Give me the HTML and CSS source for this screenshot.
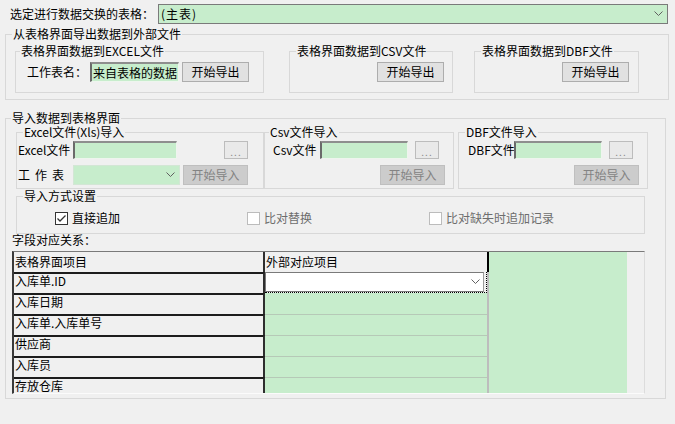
FILE: index.html
```html
<!DOCTYPE html>
<html lang="zh-CN">
<head>
<meta charset="utf-8">
<title>数据交换</title>
<link rel="stylesheet" href="styles.css">
</head>
<body>
<div class="app">
  <div class="top-row">
    <span class="top-label">选定进行数据交换的表格：</span>
    <div class="combo main-combo">
      <span class="combo-text">(主表)</span>
      <svg class="chev" width="9" height="6" viewBox="0 0 9 6"><path d="M0.5 0.5 L4.5 4.5 L8.5 0.5" fill="none" stroke="#606060" stroke-width="1"/></svg>
    </div>
  </div>

  <fieldset class="group g-export">
    <legend>从表格界面导出数据到外部文件</legend>
    <div class="sub-row">
      <fieldset class="sub ex-excel">
        <legend>表格界面数据到EXCEL文件</legend>
        <div class="line">
          <span class="lbl w-sheet">工作表名：</span>
          <input class="field w-89" type="text" value="来自表格的数据" readonly>
          <button class="btn w-67 ml-3">开始导出</button>
        </div>
      </fieldset>
      <fieldset class="sub ex-csv">
        <legend>表格界面数据到CSV文件</legend>
        <div class="line end">
          <button class="btn w-67">开始导出</button>
        </div>
      </fieldset>
      <fieldset class="sub ex-dbf">
        <legend>表格界面数据到DBF文件</legend>
        <div class="line end">
          <button class="btn w-67">开始导出</button>
        </div>
      </fieldset>
    </div>
  </fieldset>

  <fieldset class="group g-import">
    <legend>导入数据到表格界面</legend>
    <div class="imp-row">
      <fieldset class="sub imp imp-excel">
        <legend>Excel文件(Xls)导入</legend>
        <div class="line l18">
          <span class="lbl w-55">Excel文件</span>
          <input class="field w-104" type="text" value="" readonly>
          <button class="btn dots ml-47">...</button>
        </div>
        <div class="line mt-6">
          <span class="lbl w-55 spaced">工作表</span>
          <div class="combo sheet-combo">
            <svg class="chev" width="9" height="6" viewBox="0 0 9 6"><path d="M0.5 0.5 L4.5 4.5 L8.5 0.5" fill="none" stroke="#606060" stroke-width="1"/></svg>
          </div>
          <button class="btn disabled w-65 ml-3">开始导入</button>
        </div>
      </fieldset>
      <fieldset class="sub imp imp-csv">
        <legend>Csv文件导入</legend>
        <div class="line l18">
          <span class="lbl w-47">Csv文件</span>
          <input class="field w-88" type="text" value="" readonly>
          <button class="btn dots ml-7">...</button>
        </div>
        <div class="line mt-6 end">
          <button class="btn disabled w-65">开始导入</button>
        </div>
      </fieldset>
      <fieldset class="sub imp imp-dbf">
        <legend>DBF文件导入</legend>
        <div class="line l18">
          <span class="lbl w-46">DBF文件</span>
          <input class="field w-88" type="text" value="" readonly>
          <button class="btn dots ml-7">...</button>
        </div>
        <div class="line mt-6 end">
          <button class="btn disabled w-65">开始导入</button>
        </div>
      </fieldset>
    </div>

    <fieldset class="sub imp-mode">
      <legend>导入方式设置</legend>
      <div class="cb-row">
        <label class="cb cb-1">
          <span class="box checked"><svg width="11" height="11" viewBox="0 0 11 11"><path d="M1.5 5.5 L4 8 L9.5 2.5" fill="none" stroke="#333" stroke-width="1.3"/></svg></span>
          <span>直接追加</span>
        </label>
        <label class="cb cb-2 off">
          <span class="box"></span>
          <span>比对替换</span>
        </label>
        <label class="cb off">
          <span class="box"></span>
          <span>比对缺失时追加记录</span>
        </label>
      </div>
    </fieldset>

    <div class="map-label">字段对应关系：</div>

    <div class="grid">
      <div class="col col1">
        <div class="cell head">表格界面项目</div>
        <div class="cell">入库单.ID</div>
        <div class="cell">入库日期</div>
        <div class="cell">入库单.入库单号</div>
        <div class="cell">供应商</div>
        <div class="cell">入库员</div>
        <div class="cell">存放仓库</div>
      </div>
      <div class="col col2">
        <div class="cell head">外部对应项目</div>
        <div class="cell editor">
          <div class="edit-combo">
            <svg class="chev" width="9" height="6" viewBox="0 0 9 6"><path d="M0.5 0.5 L4.5 4.5 L8.5 0.5" fill="none" stroke="#606060" stroke-width="1"/></svg>
          </div>
        </div>
        <div class="cell g first"></div>
        <div class="cell g"></div>
        <div class="cell g"></div>
        <div class="cell g"></div>
        <div class="cell g"></div>
      </div>
      <div class="vsep"><div class="vsep-head"></div></div>
      <div class="fill"></div>
      <div class="gutter"></div>
    </div>
  </fieldset>
</div>
</body>
</html>
```

FILE: styles.css
```css
* { box-sizing: border-box; }
html, body { margin: 0; padding: 0; background: #f0f0f0; }
body {
  font-family: "Noto Sans CJK SC", "Noto Sans", sans-serif;
  font-size: 12px;
  line-height: 12px;
  color: #000;
  width: 675px;
  height: 424px;
  overflow: hidden;
}

/* top selector */
.top-row { display: flex; align-items: center; padding: 4px 0 0 10px; height: 24px; }
.top-label { width: 148px; white-space: nowrap; }
.combo { display: flex; align-items: center; background: #c7edcc; }
.main-combo { width: 510px; height: 20px; border: 1px solid #7a7a7a; padding-left: 2px; }
.combo-text { white-space: nowrap; letter-spacing: 1px; }
.chev { margin-left: auto; margin-right: 4px; flex: none; }

/* group boxes */
fieldset { margin: 0; padding: 0; min-width: 0; border: 1px solid #d8d8d8; }
legend { padding: 0 1px; line-height: 12px; height: 12px; white-space: nowrap; }

.group { margin-left: 5px; }
.g-export { margin-top: 4px; width: 664px; padding-bottom: 6px; }
.g-export > legend { margin-left: 6px; }
.g-import { margin-top: 12px; width: 661px; padding-bottom: 4px; }
.g-import > legend { margin-left: 5px; }

.sub-row { display: flex; margin: 5px 0 0 9px; }
.sub { padding: 5px 0 10px 0; }
.ex-excel { width: 249px; }
.ex-excel > legend { margin-left: 4px; }
.ex-excel .line { padding-left: 11px; }
.ex-csv { width: 164px; margin-left: 25px; padding-right: 8px; }
.ex-csv > legend { margin-left: 6px; }
.ex-dbf { width: 165px; margin-left: 21px; padding-right: 9px; }
.ex-dbf > legend { margin-left: 6px; }

.line { display: flex; align-items: center; height: 20px; }
.line.l18 { height: 18px; }
.line.end { justify-content: flex-end; }
.mt-6 { margin-top: 6px; }
.lbl { white-space: nowrap; flex: none; }
.w-sheet { width: 63px; }
.w-55 { width: 55px; }
.w-47 { width: 47px; }
.w-46 { width: 46px; }
.spaced { letter-spacing: 5px; }

.field {
  font: inherit;
  color: #000;
  height: 20px;
  padding: 0 0 0 1px;
  margin: 0;
  background: #c7edcc;
  border-style: solid;
  border-width: 2px 1px 1px 2px;
  border-color: #8e8e8e #eef5ee #eef5ee #6a6a6a;
  outline: none;
  flex: none;
}
.l18 .field { height: 18px; }
.w-89 { width: 89px; }
.w-104 { width: 104px; }
.w-88 { width: 88px; }

.btn {
  font: inherit;
  height: 20px;
  padding: 0;
  margin: 0;
  background: #e1e1e1;
  border: 1px solid #adadad;
  color: #000;
  flex: none;
}
.w-67 { width: 67px; }
.w-65 { width: 65px; }
.ml-3 { margin-left: 3px; }
.ml-7 { margin-left: 7px; }
.ml-47 { margin-left: 47px; }
.btn.disabled { background: #cccccc; border-color: #bfbfbf; color: #838383; }
.btn.dots { width: 24px; height: 18px; background: #e9e9e9; border-color: #bcbcbc; color: #8a8a8a; font-size: 10px; line-height: 10px; padding-top: 4px; letter-spacing: 1px; }

/* import subgroups */
.imp-row { display: flex; margin: 2px 0 0 10px; }
.imp { padding: 3px 0 3px 0; }
.imp-excel { width: 248px; }
.imp-excel > legend { margin-left: 6px; }
.imp-excel .line { padding-left: 1px; }
.imp-csv { width: 190px; padding-right: 8px; }
.imp-csv > legend { margin-left: 4px; }
.imp-csv .line.l18 { padding-left: 8px; }
.imp-dbf { width: 190px; margin-left: 4px; padding-right: 8px; }
.imp-dbf > legend { margin-left: 6px; }
.imp-dbf .line.l18 { padding-left: 9px; }

.sheet-combo { width: 107px; height: 20px; border: 1px solid #d3e6d5; flex: none; }

/* import mode */
.imp-mode { width: 629px; margin: 1px 0 0 10px; padding: 8px 0 7px 0; }
.imp-mode > legend { margin-left: 6px; }
.cb-row { display: flex; align-items: center; height: 16px; padding-left: 38px; }
.cb { display: flex; align-items: center; white-space: nowrap; }
.cb-1 { width: 192px; }
.cb-2 { width: 182px; }
.box {
  width: 13px; height: 13px; margin-right: 4px; flex: none;
  border: 1px solid #bcbcbc; background: #fff;
  display: flex; align-items: center; justify-content: center;
}
.box.checked { border-color: #333; }
.cb.off { color: #6d6d6d; }

.map-label { margin: 0 0 0 6px; height: 12px; }

/* mapping grid */
.grid {
  display: flex;
  margin: 5px 0 0 6px;
  width: 633px;
  height: 143px;
  border-style: solid;
  border-width: 1px 1px 1px 2px;
  border-color: #7a7a7a #dcdcdc #fbfbfb #3a3a3a;
  overflow: hidden;
}
.col { flex: none; display: flex; flex-direction: column; }
.col1 { width: 251px; }
.col2 { width: 222px; }
.cell { height: 21px; flex: none; display: flex; align-items: center; white-space: nowrap; overflow: hidden; padding-left: 1px; }
.cell.head { height: 20px; background: #f0f0f0; }
.col1 .cell { border-right: 2px solid #2e2e2e; background: #f0f0f0; }
.col1 .cell + .cell { border-top: 2px solid #1c1c1c; align-items: flex-start; padding-top: 1px; }
.cell.editor { padding: 0; align-items: flex-start; border-right: 1px dotted #000; border-bottom: 1px dotted #000; }
.edit-combo { width: 219px; height: 20px; background: #fff; border: 1px solid #7a7a7a; border-right-color: #9a9a9a; display: flex; align-items: center; }
.edit-combo .chev { margin-right: 3px; }
.cell.g { background: #c7edcc; border-top: 1px solid #b6c9b7; }
.cell.g.first { border-top: 0; }
.vsep { width: 2px; flex: none; background: #bdbdbd; }
.vsep-head { height: 20px; background: #000; }
.fill { width: 138px; flex: none; background: #c7edcc; }
.gutter { flex: 1; background: #f0f0f0; }
```
